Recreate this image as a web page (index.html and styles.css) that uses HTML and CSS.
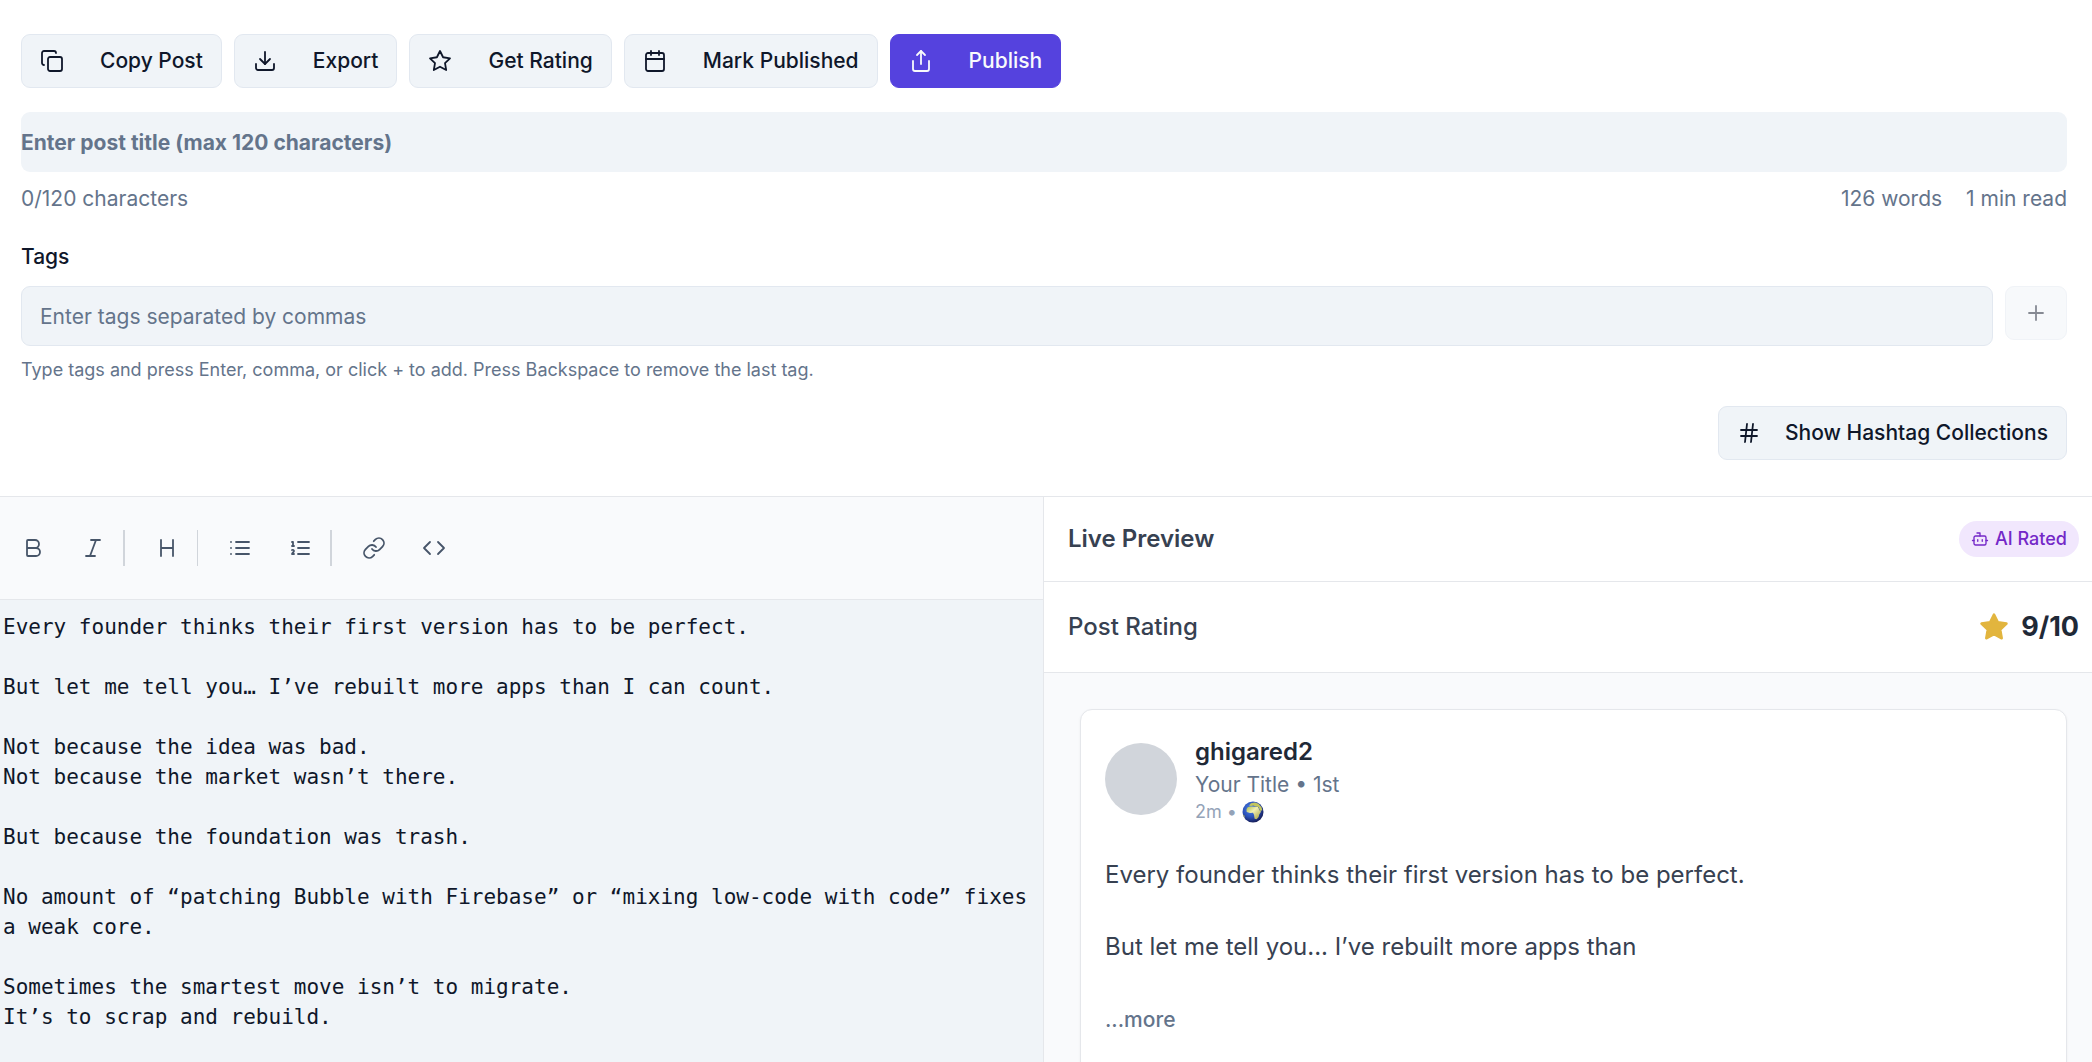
FILE: index.html
```html
<!DOCTYPE html>
<html lang="en">
<head>
<meta charset="utf-8">
<meta name="viewport" content="width=device-width, initial-scale=1">
<title>Post Editor</title>
<link rel="stylesheet" href="styles.css">
</head>
<body>
<div class="app">
  <header class="post-meta">
    <div class="actions">
      <button class="btn" type="button">
        <svg class="icon" viewBox="0 0 24 24"><rect x="8" y="8" width="14" height="14" rx="2"/><path d="M4 16c-1.100 0-2-.9-2-2V4c0-1.100.9-2 2-2h10c1.100 0 2 .9 2 2"/></svg>
        Copy Post
      </button>
      <button class="btn" type="button">
        <svg class="icon" viewBox="0 0 24 24"><path d="M21 15v4a2 2 0 0 1-2 2H5a2 2 0 0 1-2-2v-4"/><path d="M7 10l5 5 5-5"/><path d="M12 15V3"/></svg>
        Export
      </button>
      <button class="btn" type="button">
        <svg class="icon" viewBox="0 0 24 24"><path d="M12 2l3.090 6.260L22 9.270l-5 4.870 1.180 6.880L12 17.770l-6.180 3.250L7 14.140 2 9.270l6.910-1.010z"/></svg>
        Get Rating
      </button>
      <button class="btn" type="button">
        <svg class="icon" viewBox="0 0 24 24"><path d="M8 2v4M16 2v4"/><rect x="3" y="4" width="18" height="18" rx="2"/><path d="M3 10h18"/></svg>
        Mark Published
      </button>
      <button class="btn btn-primary" type="button">
        <svg class="icon" viewBox="0 0 24 24"><path d="M4 12v8a2 2 0 0 0 2 2h12a2 2 0 0 0 2-2v-8"/><path d="M16 6l-4-4-4 4"/><path d="M12 2v13"/></svg>
        Publish
      </button>
    </div>

    <input class="title-input" type="text" maxlength="120" aria-label="Post title" placeholder="Enter post title (max 120 characters)">
    <div class="stats">
      <span>0/120 characters</span>
      <span class="stats-group"><span>126 words</span><span>1 min read</span></span>
    </div>

    <label class="tags-label" for="tags">Tags</label>
    <div class="tags-row">
      <input class="tags-input" id="tags" type="text" placeholder="Enter tags separated by commas">
      <button class="btn btn-add" type="button" aria-label="Add tag" disabled>
        <svg class="icon" viewBox="0 0 24 24"><path d="M5 12h14M12 5v14"/></svg>
      </button>
    </div>
    <p class="hint">Type tags and press Enter, comma, or click + to add. Press Backspace to remove the last tag.</p>

    <div class="collections">
      <button class="btn btn-hashtags" type="button">
        <svg class="icon" viewBox="0 0 24 24"><path d="M4 9h16M4 15h16M10 3L8 21M16 3l-2 18"/></svg>
        Show Hashtag Collections
      </button>
    </div>
  </header>

  <main class="workspace">
    <section class="editor">
      <div class="toolbar">
        <div class="tools">
          <button class="tool" type="button" aria-label="Bold"><svg class="icon" viewBox="0 0 24 24"><path d="M6 12h9a4 4 0 0 1 0 8H7a1 1 0 0 1-1-1V5a1 1 0 0 1 1-1h7a4 4 0 0 1 0 8"/></svg></button>
          <button class="tool" type="button" aria-label="Italic"><svg class="icon" viewBox="0 0 24 24"><path d="M19 4h-9M14 20H5M15 4L9 20"/></svg></button>
        </div>
        <div class="tools">
          <button class="tool" type="button" aria-label="Heading"><svg class="icon" viewBox="0 0 24 24"><path d="M6 12h12M6 20V4M18 20V4"/></svg></button>
        </div>
        <div class="tools tools-lists">
          <button class="tool" type="button" aria-label="Bulleted list"><svg class="icon" viewBox="0 0 24 24"><path d="M8 6h13M8 12h13M8 18h13M3 6h.01M3 12h.01M3 18h.01"/></svg></button>
          <button class="tool" type="button" aria-label="Numbered list"><svg class="icon" viewBox="0 0 24 24"><path d="M10 6h11M10 12h11M10 18h11M4 6h1v4M4 10h2M6 18H4c0-1 2-2 2-3s-1-1.500-2-1"/></svg></button>
        </div>
        <div class="tools">
          <button class="tool" type="button" aria-label="Link"><svg class="icon" viewBox="0 0 24 24"><path d="M10 13a5 5 0 0 0 7.540.54l3-3a5 5 0 0 0-7.070-7.070l-1.720 1.710"/><path d="M14 11a5 5 0 0 0-7.540-.54l-3 3a5 5 0 0 0 7.070 7.070l1.710-1.710"/></svg></button>
          <button class="tool" type="button" aria-label="Code"><svg class="icon" viewBox="0 0 24 24"><path d="M16 18l6-6-6-6M8 6l-6 6 6 6"/></svg></button>
        </div>
      </div>
      <textarea class="content" aria-label="Post content" spellcheck="false">Every founder thinks their first version has to be perfect.

But let me tell you… I’ve rebuilt more apps than I can count.

Not because the idea was bad.
Not because the market wasn’t there.

But because the foundation was trash.

No amount of “patching Bubble with Firebase” or “mixing low-code with code” fixes a weak core.

Sometimes the smartest move isn’t to migrate.
It’s to scrap and rebuild.</textarea>
    </section>

    <section class="preview">
      <div class="preview-head">
        <h2>Live Preview</h2>
        <span class="badge">
          <svg class="icon" viewBox="0 0 24 24"><path d="M12 8V4H8"/><rect x="4" y="8" width="16" height="12" rx="2"/><path d="M2 14h2M20 14h2M15 13v2M9 13v2"/></svg>
          AI Rated
        </span>
      </div>
      <div class="rating">
        <h3>Post Rating</h3>
        <span class="score">
          <svg class="star" viewBox="0 0 24 24"><path d="M12 2l3.090 6.260L22 9.270l-5 4.870 1.180 6.880L12 17.770l-6.180 3.250L7 14.140 2 9.270l6.910-1.010z"/></svg>
          9/10
        </span>
      </div>
      <div class="preview-body">
        <article class="post">
          <div class="author">
            <div class="avatar"></div>
            <div>
              <div class="name">ghigared2</div>
              <div class="role">Your Title • 1st</div>
              <div class="time">2m •
                <svg class="globe" viewBox="0 0 22 22" role="img" aria-label="Public">
                  <defs>
                    <radialGradient id="sea" cx="40%" cy="35%" r="65%"><stop offset="0" stop-color="#4f86e8"/><stop offset=".6" stop-color="#2a50b8"/><stop offset="1" stop-color="#18205c"/></radialGradient>
                    <linearGradient id="land" x1="0" y1="0" x2="1" y2="1"><stop offset="0" stop-color="#a9bd4c"/><stop offset=".4" stop-color="#f2f0b4"/><stop offset="1" stop-color="#a09a38"/></linearGradient>
                  </defs>
                  <circle cx="11" cy="11" r="10.500" fill="url(#sea)"/>
                  <path fill="url(#land)" d="M4.500 8.800C4.500 6.500 7 5.300 9 5.500l3 .3 4 .2 2 4 1.200.5-2 3-.6 2.500-2 2.300-2-.5-.6-4-1-2-3 .3L4.700 11z"/>
                  <path fill="#c3c65e" d="M7 4.500L9 2.300l4-.8 3.500 1.200 3 3.600.8 3-2 .8L16.500 6l-3-.6-2-1-2.500.7zM.9 13.500l1.500 1 .4 3z"/>
                </svg>
              </div>
            </div>
          </div>
          <div class="post-text">Every founder thinks their first version has to be perfect.

But let me tell you... I’ve rebuilt more apps than</div>
          <button class="more" type="button">...more</button>
        </article>
      </div>
    </section>
  </main>
</div>
</body>
</html>
```
FILE: styles.css
```css
*, *::before, *::after { box-sizing: border-box; }

body {
  margin: 0;
  font-family: Inter, "Liberation Sans", sans-serif;
  font-size: 21px;
  line-height: 30px;
  color: #0f172a;
  background: #fff;
}

h2, h3, p { margin: 0; }

button, input, textarea {
  margin: 0;
  font: inherit;
  color: inherit;
}

.icon {
  flex: none;
  width: 24px;
  height: 24px;
  fill: none;
  stroke: currentColor;
  stroke-width: 1.8;
  stroke-linecap: round;
  stroke-linejoin: round;
}

.app {
  display: flex;
  flex-direction: column;
  height: 100vh;
  overflow: hidden;
}

/* Title, tags and actions */
.post-meta {
  flex: none;
  padding: 34px 25px 36px 21px;
  border-bottom: 1px solid #e5e7eb;
}

.actions {
  display: flex;
  flex-wrap: wrap;
  gap: 12px;
  margin-bottom: 24px;
}

.btn {
  display: inline-flex;
  align-items: center;
  gap: 36px;
  height: 54px;
  padding: 0 18px;
  border: 1px solid #e2e8f0;
  border-radius: 9px;
  background: #f0f4f8;
  font-weight: 500;
  white-space: nowrap;
}

.btn-primary {
  border-color: #5542de;
  background: #5542de;
  color: #f8fafc;
}

.btn-add { opacity: .5; }

.btn-hashtags { gap: 24px; }

.title-input, .tags-input {
  display: block;
  width: 100%;
  height: 60px;
  border: 0;
  border-radius: 9px;
  background: #f0f4f8;
  outline: none;
}

.title-input { padding: 0; font-weight: 700; }

.tags-input { border: 1px solid #e2e8f0; padding: 0 18px; }

input::placeholder { color: #64748b; opacity: 1; }

.stats {
  display: flex;
  justify-content: space-between;
  margin: 12px 0 28px;
  color: #64748b;
}

.stats-group { display: flex; gap: 24px; }

.tags-label {
  display: block;
  margin-bottom: 14px;
  font-weight: 500;
}

.tags-row { display: flex; gap: 12px; }

.hint {
  margin: 12px 0 24px;
  font-size: 18px;
  line-height: 24px;
  color: #64748b;
}

.collections { display: flex; justify-content: flex-end; }

/* Editor and preview */
.workspace {
  flex: 1;
  min-height: 0;
  display: grid;
  grid-template-columns: minmax(0, 1fr) minmax(0, 1fr);
}

.editor {
  display: flex;
  flex-direction: column;
  margin-right: 3px;
}

.toolbar {
  display: flex;
  align-items: center;
  flex: none;
  height: 103px;
  padding: 0 6px;
  border-bottom: 1px solid #e5e7eb;
  background: #f9fafc;
  color: #475569;
}

.tools { display: flex; align-items: center; gap: 6px; }

.tools + .tools::before {
  content: "";
  width: 2px;
  height: 36px;
  margin: 0 9px 0 3px;
  background: #d1d5db;
}

.tools + .tools-lists::before { width: 1px; }

.tool {
  display: flex;
  align-items: center;
  justify-content: center;
  width: 54px;
  height: 48px;
  padding: 0;
  border: 0;
  background: none;
}

.content {
  flex: 1;
  display: block;
  width: 100%;
  padding: 12px 3px;
  border: 0;
  outline: none;
  resize: none;
  overflow: hidden;
  background: #f0f4f8;
  font-family: "DejaVu Sans Mono", "Liberation Mono", monospace;
}

.preview {
  display: flex;
  flex-direction: column;
  min-height: 0;
  margin-left: -3px;
  border-left: 1px solid #e5e7eb;
}

.preview-head, .rating {
  display: flex;
  align-items: center;
  justify-content: space-between;
  flex: none;
  padding: 24px 13px 24px 24px;
  border-bottom: 1px solid #e5e7eb;
}

.preview h2, .preview h3 {
  font-size: 24px;
  line-height: 36px;
  font-weight: 600;
  color: #374151;
}

.preview h3 { font-weight: 500; }

.badge {
  display: flex;
  align-items: center;
  gap: 6px;
  height: 36px;
  padding: 0 12px;
  border-radius: 18px;
  background: #f1e7fd;
  color: #7428c8;
  font-size: 18px;
  font-weight: 500;
}

.badge .icon { width: 18px; height: 18px; }

.score {
  display: flex;
  align-items: center;
  gap: 12px;
  font-size: 27px;
  line-height: 42px;
  font-weight: 700;
  color: #1f2937;
}

.star {
  width: 30px;
  height: 30px;
  fill: #e2b53e;
  stroke: #e2b53e;
  stroke-width: 2;
  stroke-linejoin: round;
}

.preview-body {
  flex: 1;
  min-height: 0;
  padding: 36px 25px 36px 36px;
  overflow: hidden;
  background: #f9fafc;
}

.post {
  padding: 24px 24px 48px;
  border: 1px solid #e5e7eb;
  border-radius: 12px;
  background: #fff;
  box-shadow: 0 1px 3px rgba(0, 0, 0, .05);
}

.author { display: flex; align-items: center; gap: 18px; }

.avatar {
  width: 72px;
  height: 72px;
  border-radius: 50%;
  background: #d1d5db;
}

.name {
  font-size: 24px;
  line-height: 36px;
  font-weight: 600;
  color: #1f2937;
}

.role { color: #64748b; }

.time {
  display: flex;
  align-items: center;
  gap: 5px;
  font-size: 18px;
  line-height: 24px;
  color: #94a3b8;
}

.globe { width: 22px; height: 22px; }

.post-text {
  margin: 33px 0 40px;
  font-size: 24px;
  line-height: 36px;
  color: #374151;
  white-space: pre-line;
}

.more {
  display: block;
  padding: 0;
  border: 0;
  background: none;
  font-weight: 500;
  color: #64748b;
}
```
